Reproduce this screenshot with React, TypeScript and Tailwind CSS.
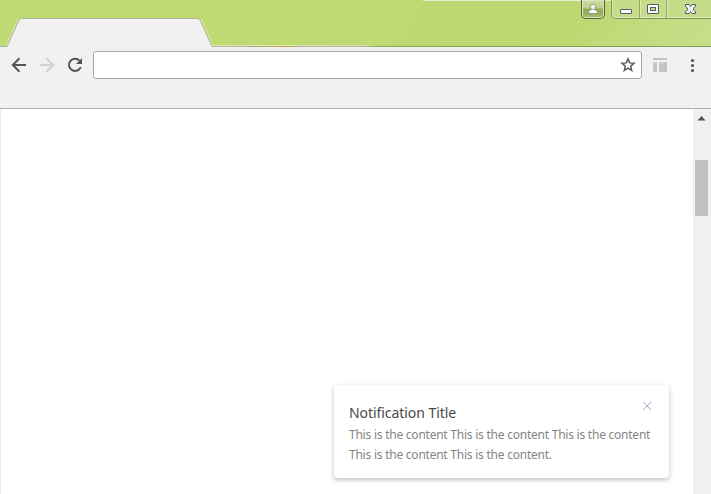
import React from "react";

function Tab() {
  return (
    <svg className="h-[29px] w-[213px] shrink-0 self-end" viewBox="0 18 213 29">
      <path d="M0 47V46.5H7L19 20Q20 18.5 21.5 18.5H198Q199.500 18.500 200 20L212 46.500H213V47Z" fill="#f1f1f1" />
      <path d="M6 45.300L18.300 19" fill="none" stroke="#dceaae" />
      <path d="M201.300 19L213 45.500" fill="none" stroke="#dceaae" />
      <path d="M0 46.500H7L19 20Q20 18.500 21.500 18.500H198Q199.500 18.500 200 20L212 46.500H213" fill="none" stroke="#b2b5a4" />
    </svg>
  );
}

function WindowControls() {
  return (
    <div className="flex h-[19px] gap-[6px]">
      <div className="flex h-[19px] w-[24px] justify-center rounded-b-[5px] border border-t-0 border-[#526039] bg-[linear-gradient(#d0dda9_0%,#bbcc8b_45%,#91a857_50%,#a6bd6b_100%)] shadow-[inset_0_0_0_1px_#dce8b9]">
        <svg className="mt-[3px] h-[12px] w-[12px]" viewBox="0 0 12 12">
          <path d="M1.500 10.500V9Q1.800 7 4.500 6.500Q3.500 5.500 3.500 3.700Q3.500 1.200 6 1.200Q8.500 1.200 8.500 3.700Q8.500 5.500 7.500 6.500Q10.200 7 10.500 9V10.500Z" fill="#fcfcfa" stroke="#75805b" strokeWidth=".7" />
          <path d="M4 6.300H8" stroke="#75805b" strokeWidth=".7" />
        </svg>
      </div>
      <div className="flex h-[19px] w-[100px] rounded-bl-[5px] border-b border-l border-[#80975a] bg-[#c5dc8b] shadow-[inset_1px_-1px_0_#dceab5]">
        <div className="w-[28px] border-r border-[#94aa66] shadow-[1px_0_0_#dceab5]">
          <svg className="h-[18px] w-[28px]" viewBox="612 0 28 18"><rect x="620.500" y="9.500" width="11" height="4" rx=".5" fill="#fafafa" stroke="#555965" /></svg>
        </div>
        <div className="w-[27px] border-r border-[#94aa66] shadow-[1px_0_0_#dceab5]">
          <svg className="h-[18px] w-[26px]" viewBox="640 0 26 18"><rect x="647.500" y="4.500" width="11" height="9" rx=".5" fill="#fafafa" stroke="#555965" /><rect x="650.500" y="7.500" width="5" height="3" fill="#c5dc8b" stroke="#555965" /></svg>
        </div>
        <svg className="h-[18px] w-[44px]" viewBox="667 0 44 18">
          <path d="M685.500 4.500H689L690.500 6.500L692 4.500H695.500V6L693.200 9L695.500 12V13.500H692L690.500 11.500L689 13.500H685.500V12L687.800 9L685.500 6Z" fill="#f2f2f2" stroke="#555965" />
        </svg>
      </div>
    </div>
  );
}

function TitleBar() {
  return (
    <header className="flex h-[47px] bg-[linear-gradient(110deg,#c0da73_0%,#c0da73_54%,#bdd870_60%,#bdd871_80%,#c1db7c_88%,#c5de89_100%)]">
      <Tab />
      <div className="flex flex-1 flex-col">
        <div className="ml-[210px] h-px bg-[#e4efcc]" />
        <div className="-mt-px flex h-[45px] justify-end"><WindowControls /></div>
        <div className="h-px bg-[linear-gradient(90deg,#dceaae_0px,#dceaae_80px,#d3e598_155px,transparent_165px)]" />
        <div className="h-px bg-[linear-gradient(90deg,#b5b8a6_0px,#b2b5a4_30px,#a0a967_40px,#c1b16b_60px,#cf933e_74px,#b5b3a0_88px,#b5b8a6_145px,#8da453_165px,#829959_498px)]" />
      </div>
    </header>
  );
}

function Toolbar() {
  return (
    <nav className="flex h-[62px] items-start border-b border-[#b1b1b1] bg-[#f1f1f1] pt-[4px]">
      <svg className="h-[28px] w-[93px] shrink-0" viewBox="0 51 93 28" fill="none" strokeWidth="2">
        <path d="M26 65H13M19.500 58.300L12.800 65L19.500 71.700" stroke="#555" />
        <path d="M40 65H53M46.500 58.300L53.200 65L46.500 71.700" stroke="#d2d2d2" />
        <path d="M79.500 60.600A6.100 6.100 0 1 0 80.800 67" stroke="#555" />
        <path d="M82 58V64H76Z" fill="#555" />
      </svg>
      <div className="flex h-[28px] w-[549px] items-center justify-end rounded-[3px] border border-[#a8a8a8] bg-white pr-[5px]">
        <svg className="h-[16px] w-[16px]" viewBox="0 0 16 16">
          <path d="M8 1.900L9.650 5.900L14 6.250L10.700 9.100L11.700 13.400L8 11.100L4.300 13.400L5.300 9.100L2 6.250L6.350 5.900Z" fill="none" stroke="#5c5c5c" strokeWidth="1.500" />
        </svg>
      </div>
      <svg className="h-[28px] w-[69px]" viewBox="642 51 69 28">
        <path d="M653 58H667V60H653ZM653 62H657V72H653ZM659 62H667V72H659Z" fill="#c3c3c3" />
        <path d="M653 66L657 63V62H653ZM659 66L666 62H659Z" fill="#cecece" />
        <g fill="#555"><circle cx="692.500" cy="60.500" r="1.600" /><circle cx="692.500" cy="65.500" r="1.600" /><circle cx="692.500" cy="70.500" r="1.600" /></g>
      </svg>
    </nav>
  );
}

function Notification() {
  return (
    <section className="mb-[16px] mr-[24px] flex h-[93px] w-[335px] items-start justify-between rounded-[4px] bg-white pl-[15px] pt-[17px] shadow-[0_2px_5px_rgba(0,0,0,0.25)]">
      <div className="whitespace-nowrap">
        <h1 className="h-[22px] text-[14px] leading-[22px] tracking-[-0.06px] text-[#484848]">Notification Title</h1>
        <p className="mt-px text-[12px] leading-[19.500px] tracking-[-0.235px] text-[#858585]">This is the content This is the content This is the content<br />This is the content This is the content.</p>
      </div>
      <svg className="-ml-[30px] -mt-px mr-[17px] h-[10px] w-[10px] shrink-0" viewBox="0 0 10 10"><path d="M1.300 1L9 9M9 1L1.300 9" stroke="#94a5c2" /></svg>
    </section>
  );
}

export default function App() {
  return (
    <div className="flex h-[494px] w-[711px] flex-col overflow-hidden bg-white font-['Noto_Sans','Open_Sans',sans-serif]">
      <TitleBar />
      <Toolbar />
      <div className="flex flex-1">
        <main className="flex flex-1 items-end justify-end border-l border-[#eeeeee] bg-white"><Notification /></main>
        <aside className="w-[18px] bg-[#f0f0f0] pl-[2px] pt-[7px]">
          <svg className="h-[5px] w-[13px]" viewBox="0 0 13 5"><path d="M2.500 4.500H10.500L6.500 0Z" fill="#505050" /></svg>
          <div className="mt-[39px] h-[56px] w-[13px] bg-[#c1c1c1]" />
        </aside>
      </div>
    </div>
  );
}
